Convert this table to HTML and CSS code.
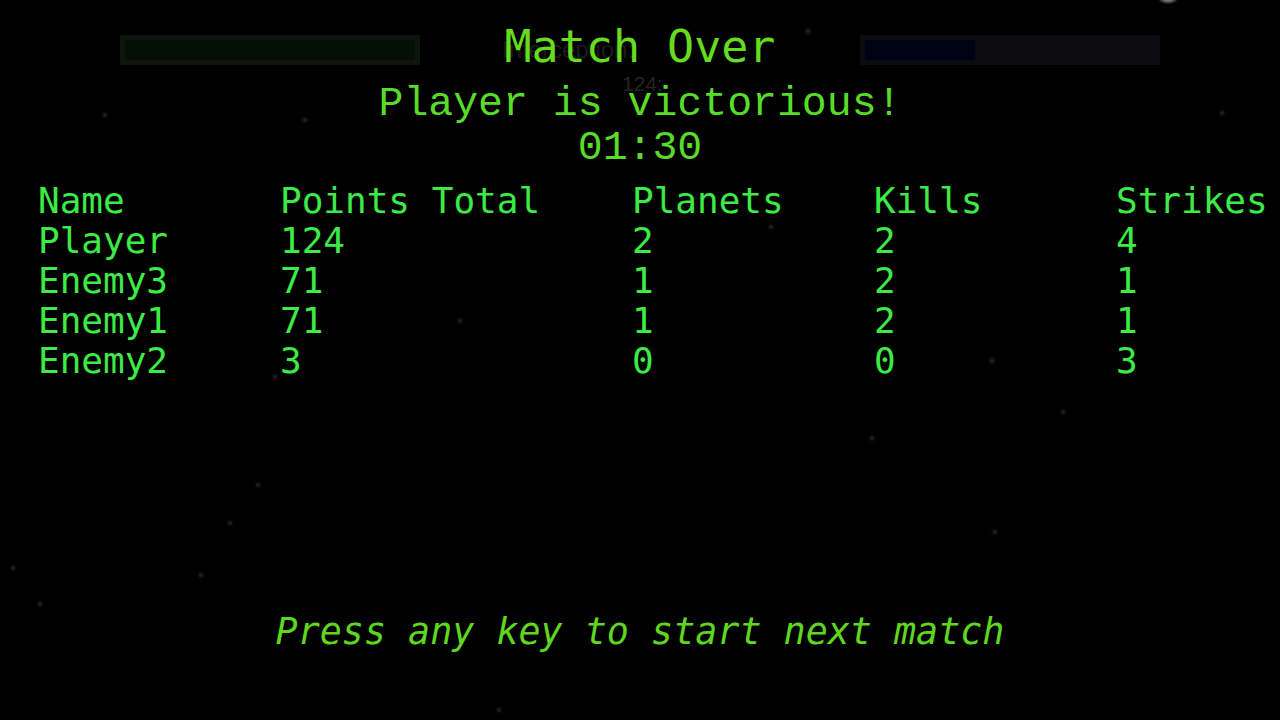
FILE: index.html
```html
<!DOCTYPE html>
<html>
<head>
<meta charset="utf-8">
<link rel="stylesheet" href="styles.css">
</head>
<body>
<div class="screen">
  <div class="stars">
    <span class="star" style="left:105px;top:115px"></span>
    <span class="star" style="left:305px;top:120px"></span>
    <span class="star" style="left:808px;top:31px"></span>
    <span class="star" style="left:1222px;top:113px"></span>
    <span class="star" style="left:771px;top:227px"></span>
    <span class="star" style="left:460px;top:321px"></span>
    <span class="star" style="left:275px;top:377px"></span>
    <span class="star" style="left:1063px;top:412px"></span>
    <span class="star" style="left:872px;top:438px"></span>
    <span class="star" style="left:992px;top:361px"></span>
    <span class="star" style="left:258px;top:485px"></span>
    <span class="star" style="left:230px;top:523px"></span>
    <span class="star" style="left:995px;top:532px"></span>
    <span class="star" style="left:13px;top:568px"></span>
    <span class="star" style="left:201px;top:575px"></span>
    <span class="star" style="left:40px;top:604px"></span>
    <span class="star" style="left:499px;top:710px"></span>
    <span class="moon"></span>
    <span class="ghost ghost-label">Interception:</span>
    <span class="ghost ghost-score">124:</span>
  </div>

  <header class="hud">
    <div class="bar bar-green"><div class="fill fill-green" style="width:100%"></div></div>
    <div class="title-slot"><h1 class="title">Match Over</h1></div>
    <div class="bar bar-blue"><div class="fill fill-blue" style="width:38%"></div></div>
  </header>

  <p class="result">Player is victorious!</p>
  <p class="clock">01:30</p>

  <div class="scores">
    <div class="cell">Name</div><div class="cell">Points Total</div><div class="cell">Planets</div><div class="cell">Kills</div><div class="cell">Strikes</div>
    <div class="cell">Player</div><div class="cell">124</div><div class="cell">2</div><div class="cell">2</div><div class="cell">4</div>
    <div class="cell">Enemy3</div><div class="cell">71</div><div class="cell">1</div><div class="cell">2</div><div class="cell">1</div>
    <div class="cell">Enemy1</div><div class="cell">71</div><div class="cell">1</div><div class="cell">2</div><div class="cell">1</div>
    <div class="cell">Enemy2</div><div class="cell">3</div><div class="cell">0</div><div class="cell">0</div><div class="cell">3</div>
  </div>

  <p class="prompt">Press any key to start next match</p>
</div>
</body>
</html>
```

FILE: styles.css
```css
html, body {
  margin: 0;
  padding: 0;
  background: #000;
}

.screen {
  position: relative;
  width: 1280px;
  height: 720px;
  overflow: hidden;
  display: flex;
  flex-direction: column;
  background: #000;
}

.stars {
  position: absolute;
  inset: 0;
  pointer-events: none;
}

.star {
  position: absolute;
  width: 4px;
  height: 4px;
  margin: -2px 0 0 -2px;
  border-radius: 50%;
  background: #1e1e1e;
  box-shadow: 0 0 3px 1px #111;
}

.moon {
  position: absolute;
  left: 1156px;
  top: -10px;
  width: 24px;
  height: 14px;
  border-radius: 50%;
  background: radial-gradient(ellipse at 50% 20%, #e6e6e6 0%, #8a8a8a 45%, rgba(0,0,0,0) 75%);
}

.ghost {
  position: absolute;
  font-family: "Liberation Sans", Arial, sans-serif;
  color: #1c1c1c;
  white-space: nowrap;
}

.ghost-label {
  left: 502px;
  top: 36px;
  font-size: 24px;
}

.ghost-score {
  left: 622px;
  top: 72px;
  font-size: 21px;
  color: #242424;
}

.hud {
  position: relative;
  display: flex;
  justify-content: center;
  align-items: flex-start;
  padding-top: 24px;
  height: 48px;
}

.bar {
  width: 300px;
  height: 30px;
  margin-top: 11px;
  box-sizing: border-box;
  padding: 5px;
  display: flex;
}

.bar-green {
  background: #0d150d;
}

.bar-blue {
  background: #0c0c10;
}

.fill {
  height: 100%;
}

.fill-green {
  background: #031003;
}

.fill-blue {
  background: #020216;
}

.title-slot {
  width: 440px;
  display: flex;
  justify-content: center;
}

.title {
  margin: 0;
  font-family: "DejaVu Sans Mono", monospace;
  font-weight: normal;
  font-size: 45px;
  line-height: 46px;
  color: #66dc1e;
}

.result,
.clock {
  position: relative;
  margin: 0;
  text-align: center;
  font-family: "Liberation Mono", "Courier New", monospace;
  font-size: 41.5px;
  line-height: 44px;
  color: #58dc2a;
}

.result {
  margin-top: 10px;
}

.scores {
  position: relative;
  margin: 11px 0 0 38px;
  display: grid;
  grid-template-columns: 242px 352px 242px 242px auto;
  font-family: "DejaVu Sans Mono", monospace;
  font-size: 36px;
  line-height: 40px;
  color: #3ceb46;
}

.cell {
  white-space: nowrap;
}

.prompt {
  position: relative;
  margin: auto 0 0 0;
  padding-bottom: 68px;
  text-align: center;
  font-family: "DejaVu Sans Mono", monospace;
  font-style: italic;
  font-size: 36.7px;
  line-height: 40px;
  color: #5ed71e;
}
```
